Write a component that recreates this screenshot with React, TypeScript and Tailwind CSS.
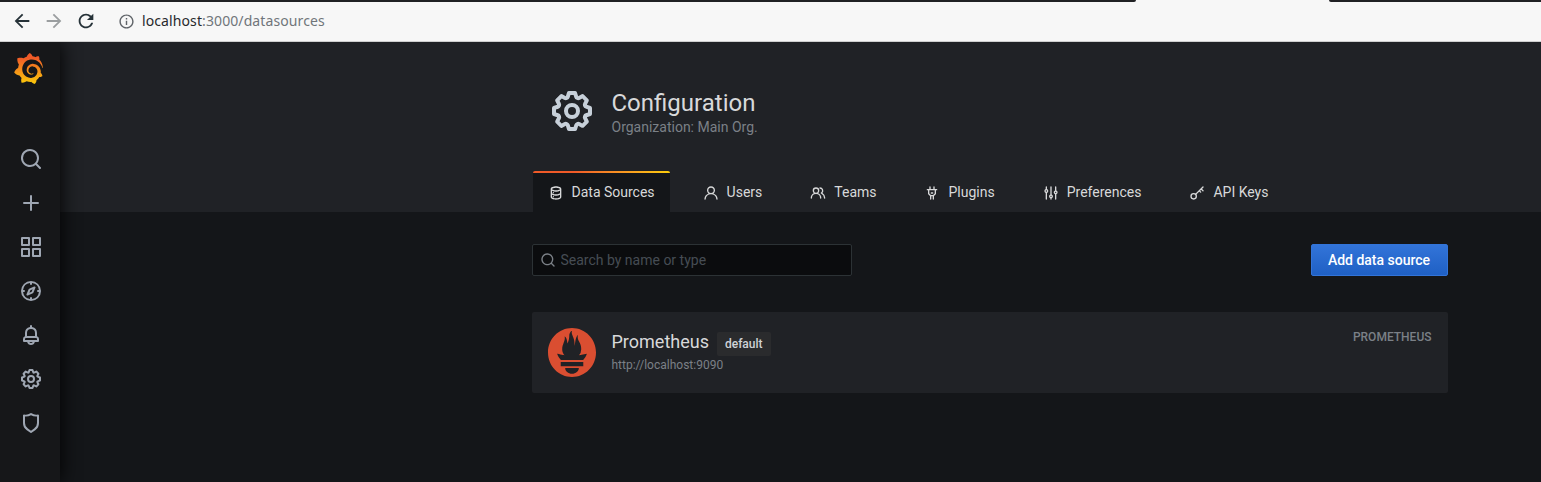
import { MdArrowBack, MdArrowForward, MdRefresh, MdInfoOutline } from "react-icons/md";
import { SiGrafana, SiPrometheus } from "react-icons/si";

const paths = {
  search:
    "M21.71,20.29,18,16.61A9,9,0,1,0,16.61,18l3.68,3.68a1,1,0,0,0,1.42,0A1,1,0,0,0,21.71,20.29ZM11,18a7,7,0,1,1,7-7A7,7,0,0,1,11,18Z",
  plus: "M19,11H13V5a1,1,0,0,0-2,0v6H5a1,1,0,0,0,0,2h6v6a1,1,0,0,0,2,0V13h6a1,1,0,0,0,0-2Z",
  apps: "M10,13H3a1,1,0,0,0-1,1v7a1,1,0,0,0,1,1h7a1,1,0,0,0,1-1V14A1,1,0,0,0,10,13ZM9,20H4V15H9ZM21,2H14a1,1,0,0,0-1,1v7a1,1,0,0,0,1,1h7a1,1,0,0,0,1-1V3A1,1,0,0,0,21,2ZM20,9H15V4h5Zm1,4H14a1,1,0,0,0-1,1v7a1,1,0,0,0,1,1h7a1,1,0,0,0,1-1V14A1,1,0,0,0,21,13Zm-1,7H15V15h5ZM10,2H3A1,1,0,0,0,2,3v7a1,1,0,0,0,1,1h7a1,1,0,0,0,1-1V3A1,1,0,0,0,10,2ZM9,9H4V4H9Z",
  compass:
    "M12,2A10,10,0,1,0,22,12,10,10,0,0,0,12,2Zm1,17.93V19a1,1,0,0,0-2,0v.93A8,8,0,0,1,4.07,13H5a1,1,0,0,0,0-2H4.07A8,8,0,0,1,11,4.07V5a1,1,0,0,0,2,0V4.07A8,8,0,0,1,19.93,11H19a1,1,0,0,0,0,2h.93A8,8,0,0,1,13,19.93ZM15.14,7.55l-5,2.12a1,1,0,0,0-.52.52l-2.12,5a1,1,0,0,0,.21,1.1,1,1,0,0,0,.7.29.93.93,0,0,0,.4-.09l5-2.12a1,1,0,0,0,.52-.52l2.12-5a1,1,0,0,0-1.31-1.31Zm-2.49,5.1-2.28,1,1-2.28,2.28-1Z",
  bell: "M18,13.18V10a6,6,0,0,0-5-5.91V3a1,1,0,0,0-2,0V4.09A6,6,0,0,0,6,10v3.18A3,3,0,0,0,4,16v2a1,1,0,0,0,1,1H8.14a4,4,0,0,0,7.72,0H19a1,1,0,0,0,1-1V16A3,3,0,0,0,18,13.18ZM8,10a4,4,0,0,1,8,0v3H8Zm4,10a2,2,0,0,1-1.72-1h3.44A2,2,0,0,1,12,20Zm6-3H6V16a1,1,0,0,1,1-1H17a1,1,0,0,1,1,1Z",
  cog: "M21.32,9.55l-1.89-.63.89-1.78A1,1,0,0,0,20.13,6L18,3.87a1,1,0,0,0-1.15-.19l-1.78.89-.63-1.89A1,1,0,0,0,13.5,2h-3a1,1,0,0,0-.95.68L8.92,4.57,7.14,3.68A1,1,0,0,0,6,3.87L3.87,6a1,1,0,0,0-.19,1.15l.89,1.78-1.89.63A1,1,0,0,0,2,10.5v3a1,1,0,0,0,.68.95l1.89.63-.89,1.78A1,1,0,0,0,3.87,18L6,20.13a1,1,0,0,0,1.15.19l1.78-.89.63,1.89a1,1,0,0,0,.95.68h3a1,1,0,0,0,.95-.68l.63-1.89,1.78.89A1,1,0,0,0,18,20.13L20.13,18a1,1,0,0,0,.19-1.15l-.89-1.78,1.89-.63A1,1,0,0,0,22,13.5v-3A1,1,0,0,0,21.32,9.55ZM20,12.78l-1.2.4A2,2,0,0,0,17.64,16l.57,1.14-1.1,1.1L16,17.64a2,2,0,0,0-2.79,1.16l-.4,1.2H11.22l-.4-1.2A2,2,0,0,0,8,17.64l-1.14.57-1.1-1.1L6.36,16A2,2,0,0,0,5.2,13.18L4,12.78V11.22l1.2-.4A2,2,0,0,0,6.36,8L5.79,6.89l1.1-1.1L8,6.36A2,2,0,0,0,10.82,5.2l.4-1.2h1.56l.4,1.2A2,2,0,0,0,16,6.36l1.14-.57,1.1,1.1L17.64,8a2,2,0,0,0,1.16,2.79l1.2.4ZM12,8a4,4,0,1,0,4,4A4,4,0,0,0,12,8Zm0,6a2,2,0,1,1,2-2A2,2,0,0,1,12,14Z",
  shield:
    "M19.63,3.65a1,1,0,0,0-.84-.2,8,8,0,0,1-6.22-1.27,1,1,0,0,0-1.14,0A8,8,0,0,1,5.21,3.45a1,1,0,0,0-.84.2A1,1,0,0,0,4,4.43v7.45a9,9,0,0,0,3.77,7.33l3.65,2.6a1,1,0,0,0,1.16,0l3.65-2.6A9,9,0,0,0,20,11.88V4.43A1,1,0,0,0,19.63,3.65ZM18,11.88a7,7,0,0,1-2.93,5.7L12,19.77,8.93,17.58A7,7,0,0,1,6,11.88V5.58a10,10,0,0,0,6-1.39,10,10,0,0,0,6,1.39Z",
  database:
    "M8,16.5a1,1,0,1,0,1,1A1,1,0,0,0,8,16.5ZM12,2C8,2,4,3.37,4,6V18c0,2.63,4,4,8,4s8-1.37,8-4V6C20,3.37,16,2,12,2Zm6,16c0,.71-2.28,2-6,2s-6-1.29-6-2V14.73A13.16,13.16,0,0,0,12,16a13.16,13.16,0,0,0,6-1.27Zm0-6c0,.71-2.28,2-6,2s-6-1.29-6-2V8.73A13.16,13.16,0,0,0,12,10a13.16,13.16,0,0,0,6-1.27ZM12,8C8.28,8,6,6.71,6,6s2.28-2,6-2,6,1.29,6,2S15.72,8,12,8ZM8,10.5a1,1,0,1,0,1,1A1,1,0,0,0,8,10.5Z",
  user: "M15.71,12.71a6,6,0,1,0-7.42,0,10,10,0,0,0-6.22,8.18,1,1,0,0,0,2,.22,8,8,0,0,1,15.9,0,1,1,0,0,0,1,.89h.11a1,1,0,0,0,.88-1.1A10,10,0,0,0,15.71,12.71ZM12,12a4,4,0,1,1,4-4A4,4,0,0,1,12,12Z",
  users:
    "M12.3,12.22A4.92,4.92,0,0,0,14,8.5a5,5,0,0,0-10,0,4.92,4.92,0,0,0,1.7,3.72A8,8,0,0,0,1,19.5a1,1,0,0,0,2,0,6,6,0,0,1,12,0,1,1,0,0,0,2,0A8,8,0,0,0,12.3,12.22ZM9,11.5a3,3,0,1,1,3-3A3,3,0,0,1,9,11.5Zm9.74.32A5,5,0,0,0,15,3.5a1,1,0,0,0,0,2,3,3,0,0,1,3,3,3,3,0,0,1-1.5,2.59,1,1,0,0,0-.5.84,1,1,0,0,0,.45.86l.39.26.13.07a7,7,0,0,1,4,6.38,1,1,0,0,0,2,0A9,9,0,0,0,18.74,11.82Z",
  plug: "M19,6H16V3a1,1,0,0,0-2,0V6H10V3A1,1,0,0,0,8,3V6H5A1,1,0,0,0,5,8H6v5a1,1,0,0,0,.29.71L9,16.41V21a1,1,0,0,0,2,0V17h2v4a1,1,0,0,0,2,0V16.41l2.71-2.7A1,1,0,0,0,18,13V8h1a1,1,0,0,0,0-2Zm-3,6.59L13.59,15H10.41L8,12.59V8h8ZM11,13h2a1,1,0,0,0,0-2H11a1,1,0,0,0,0,2Z",
  sliders:
    "M20,8.18V3a1,1,0,0,0-2,0V8.18a3,3,0,0,0,0,5.64V21a1,1,0,0,0,2,0V13.82a3,3,0,0,0,0-5.64ZM19,12a1,1,0,1,1,1-1A1,1,0,0,1,19,12Zm-6,2.18V3a1,1,0,0,0-2,0V14.18a3,3,0,0,0,0,5.64V21a1,1,0,0,0,2,0V19.82a3,3,0,0,0,0-5.64ZM12,18a1,1,0,1,1,1-1A1,1,0,0,1,12,18ZM6,6.18V3A1,1,0,0,0,4,3V6.18a3,3,0,0,0,0,5.64V21a1,1,0,0,0,2,0V11.82A3,3,0,0,0,6,6.18ZM5,10A1,1,0,1,1,6,9,1,1,0,0,1,5,10Z",
};

type IconName = keyof typeof paths | "key";

function Icon({ name, className }: { name: IconName; className: string }) {
  if (name === "key") {
    return (
      <svg viewBox="0 0 24 24" className={className} fill="none" stroke="currentColor" strokeWidth="2" strokeLinecap="round" strokeLinejoin="round">
        <circle cx="7" cy="17" r="4" />
        <path d="M9.9 14.1 21 3M15.4 8.6l2.1 2.1M18.2 5.8l2.8 2.8" />
      </svg>
    );
  }
  return (
    <svg viewBox="0 0 24 24" className={className} fill="currentColor">
      <path d={paths[name]} />
    </svg>
  );
}

const sideItems: IconName[] = ["search", "plus", "apps", "compass", "bell", "cog", "shield"];

const tabs: { icon: IconName; label: string }[] = [
  { icon: "database", label: "Data Sources" },
  { icon: "user", label: "Users" },
  { icon: "users", label: "Teams" },
  { icon: "plug", label: "Plugins" },
  { icon: "sliders", label: "Preferences" },
  { icon: "key", label: "API Keys" },
];

function BrowserBar() {
  return (
    <div className="h-[42px] shrink-0 border-b border-[#cfcfcf] bg-[#f7f7f7]">
      <div className="flex h-[2px] justify-between">
        <div className="w-[1136px] rounded-br-[4px] bg-[#202124]" />
        <div className="w-[212px] rounded-bl-[4px] bg-[#202124]" />
      </div>
      <div className="flex h-[38px] items-center pl-[11px]">
        <MdArrowBack className="size-[22px] text-[#263238]" />
        <MdArrowForward className="ml-[10px] size-[22px] text-[#9b9ea0]" />
        <MdRefresh className="ml-[10px] size-[22px] text-[#263238]" />
        <MdInfoOutline className="ml-[20.5px] size-[17px] text-[#5f6368]" />
        <div className="ml-[7.5px] font-['Noto_Sans',sans-serif] text-sm tracking-[0.1px] text-[#70757a]">
          <span className="text-[#27292c]">localhost</span>:3000/datasources
        </div>
      </div>
    </div>
  );
}

function Sidebar() {
  return (
    <nav className="z-10 flex w-[60px] shrink-0 flex-col bg-[#161719] shadow-[0_0_20px_black]">
      <div className="flex h-[95px] pt-[11px] pl-[12.5px]">
        <svg width="0" height="0">
          <defs>
            <linearGradient id="grafana-fill" x1="0" y1="0" x2="0" y2="1">
              <stop offset="0.15" stopColor="#f05a28" />
              <stop offset="1" stopColor="#fbca0a" />
            </linearGradient>
          </defs>
        </svg>
        <SiGrafana className="h-[31px] w-[31px]" fill="url(#grafana-fill)" preserveAspectRatio="none" />
      </div>
      {sideItems.map((name) => (
        <div key={name} className="flex h-11 items-center justify-center pl-[2px] text-[#9fa7b3]">
          <Icon name={name} className="size-6" />
        </div>
      ))}
    </nav>
  );
}

export default function App() {
  return (
    <div className="flex h-[482px] w-[1541px] flex-col overflow-hidden bg-[#141619] font-['Roboto',sans-serif] text-sm text-[#c7d0d9]">
      <BrowserBar />
      <div className="flex min-h-0 flex-1 overflow-hidden">
        <Sidebar />
        <div className="flex flex-1 flex-col">
          <header className="flex h-[170px] flex-col bg-[#202226] pl-[471.5px]">
            <div className="flex h-[129px] pt-[45px] pl-4">
              <Icon name="cog" className="size-12" />
              <div className="ml-4">
                <h1 className="text-2xl leading-8 text-[#d8d9da]">Configuration</h1>
                <div className="leading-4 text-[#7b8087]">Organization: Main Org.</div>
              </div>
            </div>
            <div className="flex h-[41px]">
              {tabs.map(({ icon, label }, i) => (
                <div
                  key={label}
                  className={
                    i === 0
                      ? "mr-[17px] ml-px flex flex-col overflow-hidden rounded-t-[2px] bg-[#141619] text-[#d8d9da]"
                      : "mr-4 flex flex-col text-[#d8d9da]"
                  }
                >
                  <div
                    className={
                      i === 0 ? "h-[2px] bg-linear-to-r from-[#f05a28] from-30% to-[#fbca0a] to-99%" : "h-[2px]"
                    }
                  />
                  <div
                    className={
                      i === 0
                        ? "flex flex-1 items-center gap-2 px-[15px] pb-[2px]"
                        : "flex flex-1 items-center gap-2 px-4 pb-[2px]"
                    }
                  >
                    <Icon name={icon} className={icon === "plug" ? "mt-[2px] mr-[0.5px] -ml-[0.5px] size-4" : "mt-[2px] size-4"} />
                    <span>{label}</span>
                  </div>
                </div>
              ))}
            </div>
          </header>
          <main className="ml-[471.5px] w-[916px] pt-8">
            <div className="flex items-center justify-between">
              <label className="flex h-8 w-80 items-center gap-1 rounded-[2px] border border-[#2c3235] bg-[#0b0c0e] pl-[7px] text-[#7b8087]">
                <Icon name="search" className="size-4" />
                <input
                  className="min-w-0 flex-1 bg-transparent pl-px outline-none placeholder:text-[#464c54]"
                  placeholder="Search by name or type"
                />
              </label>
              <button className="h-8 w-[137px] rounded-[2px] border border-[#3274d9] bg-linear-to-b from-[#3274d9] to-[#1f60c4] font-medium text-white">
                Add data source
              </button>
            </div>
            <div className="mt-9 flex h-[81px] rounded-[2px] bg-[#202226] p-4">
              <SiPrometheus className="h-[49px] w-12 text-[#da4e31]" preserveAspectRatio="none" />
              <div className="ml-4">
                <div className="flex">
                  <h2 className="text-lg leading-[28px] text-[#d8d9da]">Prometheus</h2>
                  <span className="mt-1 ml-2 flex h-6 items-center rounded-[2px] bg-[#2a2b2d] px-2 text-xs font-medium text-[#d0d3d7]">
                    default
                  </span>
                </div>
                <div className="text-xs leading-[18px] text-[#7b8087]">http://localhost:9090</div>
              </div>
              <div className="ml-auto text-xs leading-[18px] font-medium text-[#7b8087]">PROMETHEUS</div>
            </div>
          </main>
        </div>
      </div>
    </div>
  );
}
